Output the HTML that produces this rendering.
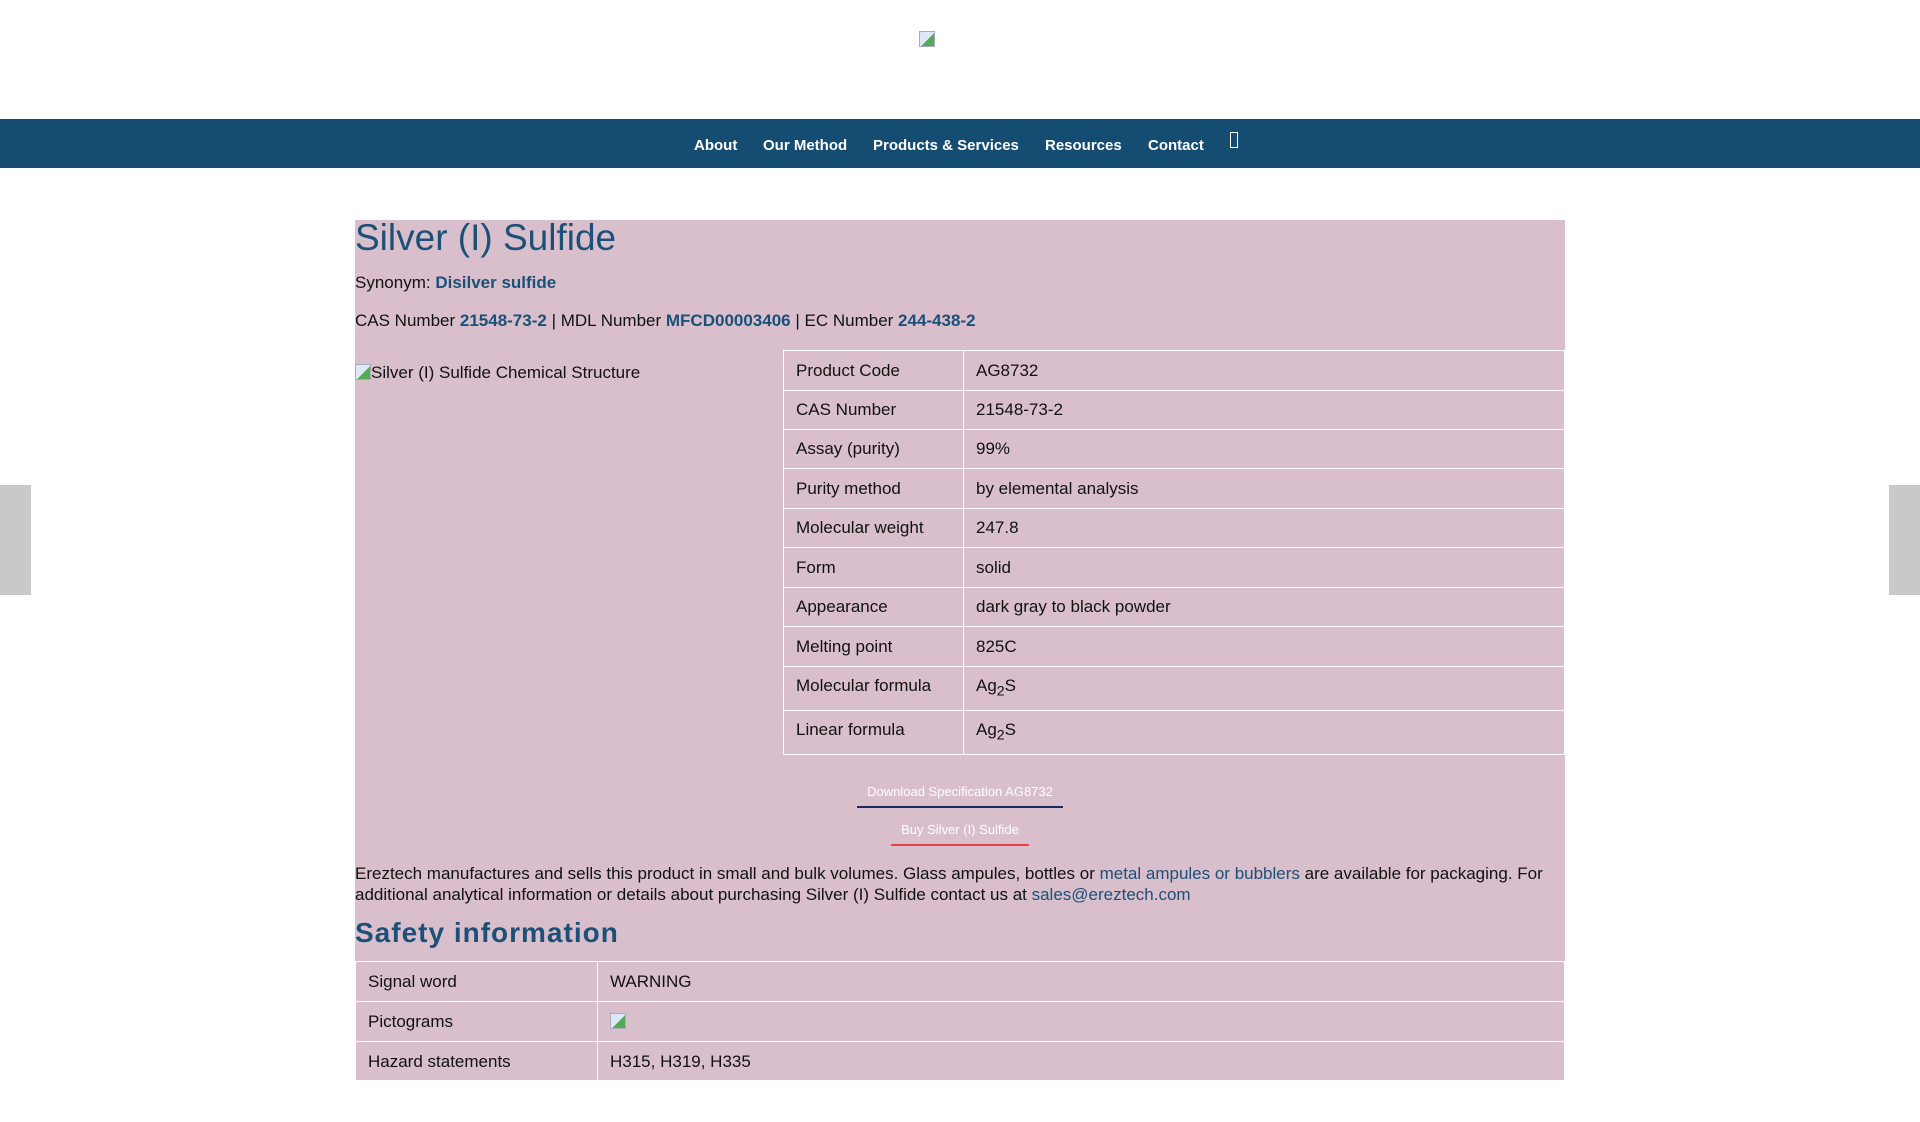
<!DOCTYPE html>
<html><head><meta charset="utf-8"><style>
*{margin:0;padding:0;box-sizing:border-box}
body{width:1920px;height:1080px;overflow:hidden;background:#fff;font-family:"Liberation Sans",Arial,sans-serif;color:#111;font-size:17px;position:relative}
.a{position:absolute;white-space:nowrap}
.nav{position:absolute;left:0;top:119px;width:1920px;height:49px;background:#154c71}
.nav span{position:absolute;top:18px;color:#fff;font-weight:bold;font-size:15px}
.box{position:absolute;left:355px;top:220px;width:1210px;height:860px;background:#d9bfcc}
a,.l{color:#1b5078;text-decoration:none}
.b{font-weight:bold}
table{position:absolute;border-collapse:collapse}
td{border:1.5px solid #fff;padding:0 12px;font-size:17px;vertical-align:middle}
tr.f td{vertical-align:top;padding-top:9px}
.tab{position:absolute;top:485px;width:31px;height:110px;background:#c9c9c9}
.img{display:inline-block;width:16px;height:16px;border:1px solid #aab;background:linear-gradient(135deg,#dde8f8 55%,#5a5 55%);vertical-align:-2px}
</style></head><body>
<div class="a" style="left:919px;top:30px"><span class="img"></span></div>
<div class="nav">
<span style="left:694px">About</span>
<span style="left:763px">Our Method</span>
<span style="left:873px">Products &amp; Services</span>
<span style="left:1045px">Resources</span>
<span style="left:1148px">Contact</span>
<span style="left:1230px;top:13px;width:8px;height:16px;border:1.5px solid #fff"></span>
</div>
<div class="tab" style="left:0"></div>
<div class="tab" style="left:1889px"></div>
<div class="box"></div>
<div class="a l" style="left:355px;top:217px;font-size:37px">Silver (I) Sulfide</div>
<div class="a" style="left:355px;top:273px">Synonym: <span class="l b">Disilver sulfide</span></div>
<div class="a" style="left:355px;top:311px">CAS Number <span class="l b">21548-73-2</span> | MDL Number <span class="l b">MFCD00003406</span> | EC Number <span class="l b">244-438-2</span></div>
<div class="a" style="left:355px;top:363px"><span class="img"></span>Silver (I) Sulfide Chemical Structure</div>
<table style="left:783px;top:350px;width:782px">
<col style="width:180px"><col>
<tr style="height:40px"><td>Product Code</td><td>AG8732</td></tr>
<tr style="height:39px"><td>CAS Number</td><td>21548-73-2</td></tr>
<tr style="height:39px"><td>Assay (purity)</td><td>99%</td></tr>
<tr style="height:40px"><td>Purity method</td><td>by elemental analysis</td></tr>
<tr style="height:39px"><td>Molecular weight</td><td>247.8</td></tr>
<tr style="height:40px"><td>Form</td><td>solid</td></tr>
<tr style="height:39px"><td>Appearance</td><td>dark gray to black powder</td></tr>
<tr style="height:40px"><td>Melting point</td><td>825C</td></tr>
<tr class="f" style="height:44px"><td>Molecular formula</td><td>Ag<sub>2</sub>S</td></tr>
<tr class="f" style="height:44px"><td>Linear formula</td><td>Ag<sub>2</sub>S</td></tr>
</table>
<div class="a" style="left:857px;top:784px;width:206px;text-align:center;color:#fff;font-size:13px;padding-bottom:7px;border-bottom:2px solid #1a2a5a">Download Specification AG8732</div>
<div class="a" style="left:891px;top:822px;width:138px;text-align:center;color:#fff;font-size:13px;padding-bottom:7px;border-bottom:2px solid #e84040">Buy Silver (I) Sulfide</div>
<div class="a" style="left:355px;top:863px;line-height:21px">Ereztech manufactures and sells this product in small and bulk volumes. Glass ampules, bottles or <a>metal ampules or bubblers</a> are available for packaging. For<br>additional analytical information or details about purchasing Silver (I) Sulfide contact us at <a>sales@ereztech.com</a></div>
<div class="a l b" style="left:355px;top:917px;font-size:28px;letter-spacing:1px">Safety information</div>
<table style="left:355px;top:961px;width:1210px">
<col style="width:242px"><col>
<tr style="height:40px"><td>Signal word</td><td>WARNING</td></tr>
<tr style="height:40px"><td>Pictograms</td><td><span class="img"></span></td></tr>
<tr style="height:40px"><td>Hazard statements</td><td>H315, H319, H335</td></tr>
<tr style="height:40px"><td>&nbsp;</td><td>&nbsp;</td></tr>
</table>
</body></html>
